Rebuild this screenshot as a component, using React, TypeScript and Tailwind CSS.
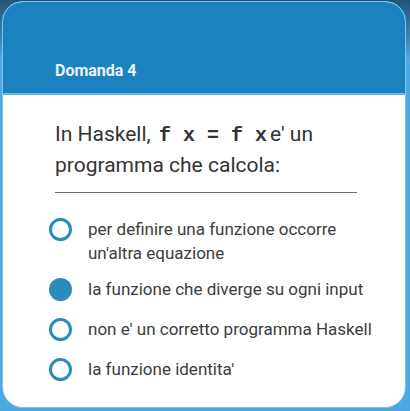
import * as React from "react";

const options = [
  "per definire una funzione occorre un'altra equazione",
  "la funzione che diverge su ogni input",
  "non e' un corretto programma Haskell",
  "la funzione identita'",
];

function Radio({ checked }: { checked: boolean }) {
  return (
    <span
      className={
        checked
          ? "mt-px h-[23px] w-[23px] shrink-0 rounded-full bg-[#2a8cbb]"
          : "mt-px h-[23px] w-[23px] shrink-0 rounded-full border-[3px] border-[#2a8cbb] bg-white"
      }
    />
  );
}

export default function App() {
  const [selected, setSelected] = React.useState(1);

  return (
    <div className="h-[411px] w-[410px] overflow-hidden bg-[linear-gradient(180deg,#1f5675_0px,#3f88b8_40px,#4ea9e2_60px,#4ea9e2_100%)] pl-[3px] pt-[2px] font-['Roboto',sans-serif]">
      <div className="flex h-[405px] w-[402px] flex-col overflow-hidden rounded-[20px] bg-white shadow-[0_0_0_1px_#7cc3ef]">
        <div className="flex h-[91px] shrink-0 items-end bg-[#1b81bf] pb-[14px] pl-[52px]">
          <span className="text-[16px] font-bold leading-none text-[#eaf5fc]">Domanda 4</span>
        </div>
        <div className="h-[2px] shrink-0 bg-[#62b6e8]" />

        <div className="pl-[52px] pr-[20px] pt-[24px]">
          <div className="w-[302px]">
            <p className="text-[21px] leading-[31px] text-[#333]">
              In Haskell,{" "}
              <code className="ml-[3px] mr-[3px] font-['Liberation_Mono',monospace] text-[20px] font-bold leading-none">
                f x = f x
              </code>
              e' un programma che calcola:
            </p>
            <div className="mt-[11px] h-px bg-[#6f6f6f]" />
          </div>

          <ul className="-ml-[6px] mt-[24px] flex flex-col gap-4">
            {options.map((text, i) => (
              <li
                key={i}
                className={i === 0 ? "-mb-1 flex cursor-pointer items-start gap-4 pr-[20px]" : "flex cursor-pointer items-start gap-4"}
                onClick={() => setSelected(i)}
              >
                <Radio checked={selected === i} />
                <span className="text-[17px] leading-6 text-[#3d3d3d]">{text}</span>
              </li>
            ))}
          </ul>
        </div>
      </div>
    </div>
  );
}
